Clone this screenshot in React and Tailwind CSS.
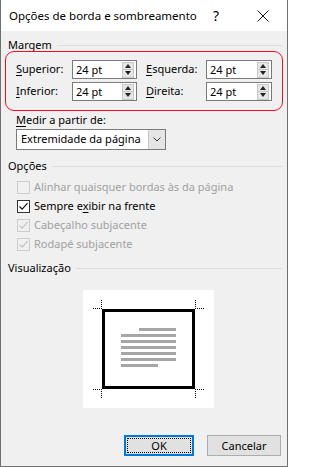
import React from "react";

const font = { fontFamily: '"Noto Sans", "Liberation Sans", sans-serif' };

function U({ children }) {
  return <span className="underline underline-offset-[2px]">{children}</span>;
}

function Spinner() {
  return (
    <div className="flex flex-col w-[12px] h-[16px] border border-[#c8c8c8] bg-[#e6e6e6]">
      <div className="flex-1 flex items-center justify-center border-b border-[#c8c8c8]">
        <svg width="6" height="4" viewBox="0 0 6 4"><path d="M0 4 L3 0 L6 4 Z" fill="#222" /></svg>
      </div>
      <div className="flex-1 flex items-center justify-center">
        <svg width="6" height="4" viewBox="0 0 6 4"><path d="M0 0 L3 4 L6 0 Z" fill="#222" /></svg>
      </div>
    </div>
  );
}

function NumInput({ w }) {
  return (
    <div className={`${w} h-[19px] bg-white border border-[#7a7a7a] flex items-center justify-between pl-[3px] pr-[2px]`}>
      <span className="text-[11px] leading-none whitespace-nowrap">24 pt</span>
      <Spinner />
    </div>
  );
}

function Check({ checked, disabled, children }) {
  return (
    <div className="flex items-center h-[19px] pl-[16px]">
      <div className={`w-[13px] h-[13px] border flex items-center justify-center ${disabled ? "border-[#cccccc] bg-[#f0f0f0]" : "border-[#333333] bg-white"}`}>
        {checked && (
          <svg width="11" height="11" viewBox="0 0 11 11">
            <path d="M1.5 5.5 L4.2 8.2 L9.5 2.2" fill="none" stroke={disabled ? "#c4c4c4" : "#111"} strokeWidth="1.2" />
          </svg>
        )}
      </div>
      <span className={`ml-[4px] text-[11px] whitespace-nowrap ${disabled ? "text-[#a0a0a0]" : "text-black"}`}>{children}</span>
    </div>
  );
}

function GroupTitle({ children }) {
  return (
    <div className="flex items-center h-[12px] pl-[7px] pr-[5px]">
      <span className="text-[11px] leading-[12px] whitespace-nowrap">{children}</span>
      <div className="flex-1 h-px bg-[#dcdcdc] ml-[5px]" />
    </div>
  );
}

export default function App() {
  return (
    <div style={font} className="w-[289px] h-[467px] bg-white text-black">
      <div className="w-[288px] h-[467px] border-l border-r border-b border-[#707070] flex flex-col bg-[#f0f0f0]">
        {/* Title bar */}
        <div className="h-[31px] bg-white flex items-center shrink-0">
          <span className="pl-[8px] text-[11.5px] flex-1 min-w-0 whitespace-nowrap">Opções de borda e sombreamento</span>
          <span className="text-[14px] w-[14px] mr-[34px] text-center">?</span>
          <svg width="12" height="12" viewBox="0 0 12 12" className="mr-[18px] shrink-0">
            <path d="M0.5 0.5 L11.5 11.5 M11.5 0.5 L0.5 11.5" stroke="#111" strokeWidth="1" />
          </svg>
        </div>

        {/* Margem */}
        <div className="mt-[8px]">
          <GroupTitle>Margem</GroupTitle>
        </div>
        <div className="ml-[4px] w-[278px] h-[60px] border border-[#e81123] rounded-[9px] pl-[10px] pt-[8px] flex flex-col gap-[3px]">
          <div className="flex items-center">
            <span className="w-[56px] text-[11px] whitespace-nowrap"><U>S</U>uperior:</span>
            <NumInput w="w-[65px]" />
            <span className="w-[60px] ml-[9px] text-[11px] whitespace-nowrap"><U>E</U>squerda:</span>
            <NumInput w="w-[66px]" />
          </div>
          <div className="flex items-center">
            <span className="w-[56px] text-[11px] whitespace-nowrap"><U>I</U>nferior:</span>
            <NumInput w="w-[65px]" />
            <span className="w-[60px] ml-[9px] text-[11px] whitespace-nowrap"><U>D</U>ireita:</span>
            <NumInput w="w-[66px]" />
          </div>
        </div>

        {/* Medir a partir de */}
        <div className="pl-[15px] mt-[1px] h-[16px] text-[11px] leading-[16px] whitespace-nowrap"><U>M</U>edir a partir de:</div>
        <div className="ml-[15px] mt-[1px] w-[150px] h-[21px] bg-white border border-[#7a7a7a] flex items-center">
          <span className="flex-1 pl-[4px] text-[11px] whitespace-nowrap">Extremidade da página</span>
          <div className="w-[17px] h-full bg-[#e5e5e5] border-l border-[#c8c8c8] flex items-center justify-center">
            <svg width="8" height="5" viewBox="0 0 8 5"><path d="M0.5 0.5 L4 4 L7.5 0.5" fill="none" stroke="#333" strokeWidth="1" /></svg>
          </div>
        </div>

        {/* Opções */}
        <div className="mt-[10px]">
          <GroupTitle>Opções</GroupTitle>
        </div>
        <div className="mt-[6px] flex flex-col">
          <Check disabled>Alinhar quaisquer bordas às da página</Check>
          <Check checked>Sempre e<U>x</U>ibir na frente</Check>
          <Check checked disabled>Cabeçalho subjacente</Check>
          <Check checked disabled>Rodapé subjacente</Check>
        </div>

        {/* Visualização */}
        <div className="mt-[8px]">
          <GroupTitle>Visualização</GroupTitle>
        </div>
        <div className="ml-[82px] mt-[16px] w-[131px] h-[118px] bg-white">
          <svg width="131" height="118" viewBox="0 0 131 118">
            <rect x="20.5" y="20.5" width="90" height="77" fill="none" stroke="#000" strokeWidth="3" />
            <g stroke="#000" strokeWidth="1" strokeDasharray="1 1">
              <path d="M10 18.5 H19 M18.5 10 V19" />
              <path d="M112 18.5 H121 M112.5 10 V19" />
              <path d="M10 99.5 H19 M18.5 99 V108" />
              <path d="M112 99.5 H121 M112.5 99 V108" />
            </g>
            <g fill="#a6a6a6">
              <rect x="56" y="38" width="37" height="3" />
              <rect x="38" y="44" width="55" height="3" />
              <rect x="38" y="50" width="55" height="3" />
              <rect x="38" y="56" width="55" height="3" />
              <rect x="38" y="62" width="55" height="3" />
              <rect x="38" y="68" width="55" height="3" />
              <rect x="38" y="74" width="37" height="3" />
            </g>
          </svg>
        </div>

        {/* Buttons */}
        <div className="mt-auto mb-[10px] flex justify-end gap-[13px] pr-[6px]">
          <button className="w-[70px] h-[21px] bg-[#e1e1e1] border-2 border-[#0078d7] flex items-center justify-center p-[1px]">
            <span className="w-full h-full border border-dotted border-black flex items-center justify-center text-[11px] leading-none">OK</span>
          </button>
          <button className="w-[74px] h-[21px] bg-[#e1e1e1] border border-[#adadad] text-[11px] leading-none">Cancelar</button>
        </div>
      </div>
    </div>
  );
}
